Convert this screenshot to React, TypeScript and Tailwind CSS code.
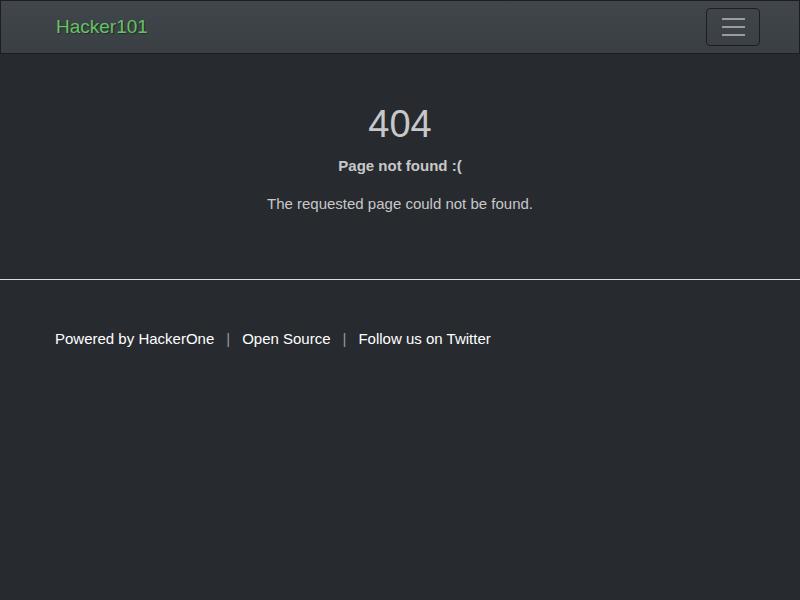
export default function App() {
  return (
    <div
      className="min-h-[600px] bg-[#272b30] text-[#c8c8c8]"
      style={{ fontFamily: '"Liberation Sans", Arial, sans-serif' }}
    >
      {/* Navbar */}
      <nav className="h-[54px] border border-[#1c1e22] bg-gradient-to-b from-[#41464c] to-[#3a3f44] flex items-center justify-between pl-[55px] pr-[39px]">
        <a
          href="#"
          className="text-[19px] text-[#62c462] [text-shadow:1px_1px_1px_rgba(0,0,0,0.4)]"
        >
          Hacker101
        </a>
        <button
          type="button"
          className="w-[54px] h-[38px] rounded-[4px] border border-[#1c1e22] flex flex-col items-center justify-center gap-[6px]"
        >
          <span className="block w-[23px] h-[2px] bg-[#9a9da0]" />
          <span className="block w-[23px] h-[2px] bg-[#9a9da0]" />
          <span className="block w-[23px] h-[2px] bg-[#9a9da0]" />
        </button>
      </nav>

      {/* Error message */}
      <main className="pt-[46px] pb-[64px] text-center">
        <h1 className="text-[38px] leading-[48px]">404</h1>
        <p className="mt-[7px] text-[15px] font-bold leading-[22px]">Page not found :(</p>
        <p className="mt-[16px] text-[15px] leading-[22px]">The requested page could not be found.</p>
      </main>

      <hr className="border-0 border-t border-[#dddddd]" />

      {/* Footer */}
      <footer className="pl-[55px] pt-[48px] text-[15px] leading-[22px] text-white flex items-center">
        <a href="#">Powered by HackerOne</a>
        <span className="mx-[12px] text-[#999999]">|</span>
        <a href="#">Open Source</a>
        <span className="mx-[12px] text-[#999999]">|</span>
        <a href="#">Follow us on Twitter</a>
      </footer>
    </div>
  );
}
